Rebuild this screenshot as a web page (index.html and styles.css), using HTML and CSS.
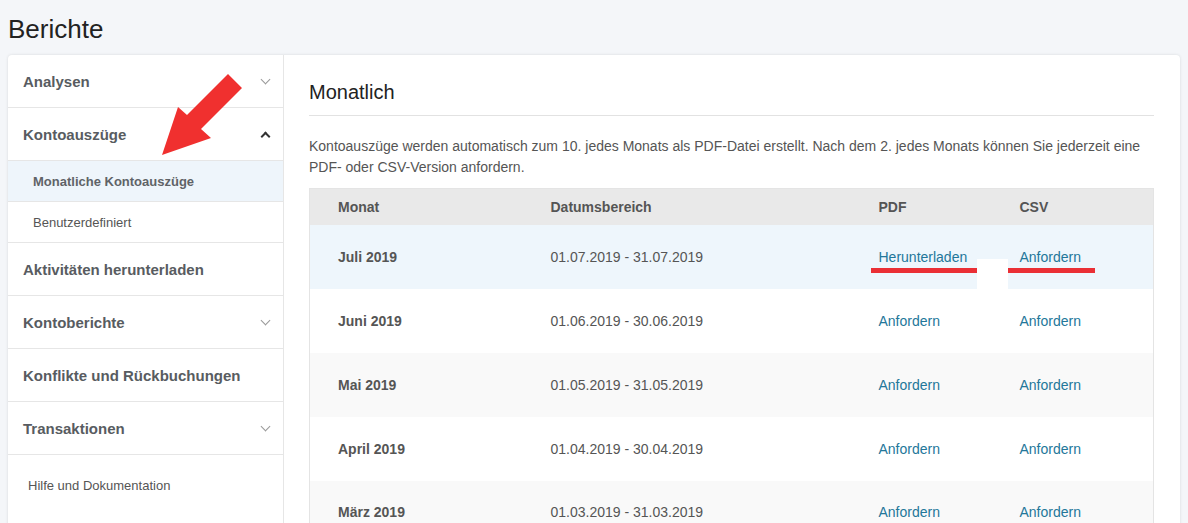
FILE: index.html
```html
<!DOCTYPE html>
<html lang="de">
<head>
    <meta charset="UTF-8">
    <title>Berichte</title>
    <link rel="stylesheet" href="styles.css">
</head>
<body>
    <h1 class="pageTitle">Berichte</h1>

    <div class="card">
        <ul class="sidebar">
            <li class="navItem">Analysen <span class="chev"></span></li>
            <li class="navItem open">Kontoauszüge <span class="chev up"></span></li>
            <li class="subItem active">Monatliche Kontoauszüge</li>
            <li class="subItem">Benutzerdefiniert</li>
            <li class="navItem">Aktivitäten herunterladen</li>
            <li class="navItem">Kontoberichte <span class="chev"></span></li>
            <li class="navItem">Konflikte und Rückbuchungen</li>
            <li class="navItem">Transaktionen <span class="chev"></span></li>
            <li class="helpItem">Hilfe und Dokumentation</li>
        </ul>

        <div class="main">
            <h2>Monatlich</h2>
            <p class="intro">Kontoauszüge werden automatisch zum 10. jedes Monats als PDF-Datei erstellt. Nach dem 2. jedes Monats können Sie jederzeit eine PDF- oder CSV-Version anfordern.</p>

            <table class="statements">
                <thead>
                    <tr>
                        <th class="c1">Monat</th>
                        <th class="c2">Datumsbereich</th>
                        <th class="c3">PDF</th>
                        <th class="c4">CSV</th>
                    </tr>
                </thead>
                <tbody>
                    <tr class="current">
                        <td class="month">Juli 2019</td>
                        <td>01.07.2019 - 31.07.2019</td>
                        <td><a href="#">Herunterladen</a></td>
                        <td><a href="#">Anfordern</a></td>
                    </tr>
                    <tr>
                        <td class="month">Juni 2019</td>
                        <td>01.06.2019 - 30.06.2019</td>
                        <td><a href="#">Anfordern</a></td>
                        <td><a href="#">Anfordern</a></td>
                    </tr>
                    <tr>
                        <td class="month">Mai 2019</td>
                        <td>01.05.2019 - 31.05.2019</td>
                        <td><a href="#">Anfordern</a></td>
                        <td><a href="#">Anfordern</a></td>
                    </tr>
                    <tr>
                        <td class="month">April 2019</td>
                        <td>01.04.2019 - 30.04.2019</td>
                        <td><a href="#">Anfordern</a></td>
                        <td><a href="#">Anfordern</a></td>
                    </tr>
                    <tr>
                        <td class="month">März 2019</td>
                        <td>01.03.2019 - 31.03.2019</td>
                        <td><a href="#">Anfordern</a></td>
                        <td><a href="#">Anfordern</a></td>
                    </tr>
                </tbody>
            </table>
        </div>
    </div>

    <!-- annotations drawn over the screenshot -->
    <svg class="arrow" width="260" height="170" viewBox="0 0 260 170">
        <polygon points="228,74 242,88 201,129 211,138 162,155 178,107 187,115" fill="#f0302f"/>
    </svg>
    <div class="mark mark1"></div>
    <div class="mark mark2"></div>
    <div class="gap"></div>
</body>
</html>
```

FILE: styles.css
```css
*{
    margin: 0;
    padding: 0;
    box-sizing: border-box;
}

body{
    background-color: #f4f6f9;
    font-family: "Liberation Sans", Arial, sans-serif;
    color: #555;
    padding: 0 8px;
    overflow: hidden;
}

.pageTitle{
    font-size: 26px;
    font-weight: normal;
    color: #222;
    line-height: 30px;
    padding-top: 14px;
    margin-bottom: 11px;
}

.card{
    display: flex;
    background: #fff;
    border-radius: 4px;
    box-shadow: 0 0 3px rgba(0, 0, 0, 0.12);
    width: 1172px;
}

.sidebar{
    list-style-type: none;
    width: 276px;
    flex-shrink: 0;
    border-right: 1px solid #e6e6e6;
}

.navItem{
    height: 53px;
    border-bottom: 1px solid #e6e6e6;
    display: flex;
    align-items: center;
    justify-content: space-between;
    padding: 0 11px 0 15px;
    font-size: 15px;
    font-weight: bold;
    color: #585c61;
}

.chev{
    width: 7px;
    height: 7px;
    border-right: 1px solid #999;
    border-bottom: 1px solid #999;
    transform: rotate(45deg);
    margin-right: 3px;
    margin-top: -4px;
}

.chev.up{
    border-color: #333;
    border-width: 2px;
    transform: rotate(-135deg);
    margin-top: 4px;
}

.subItem{
    height: 41px;
    border-bottom: 1px solid #e6e6e6;
    display: flex;
    align-items: center;
    padding-left: 25px;
    font-size: 13px;
    color: #555;
}

.subItem.active{
    background: #eef5fb;
    font-weight: bold;
    color: #5f6367;
}

.helpItem{
    height: 60px;
    display: flex;
    align-items: center;
    padding-left: 20px;
    font-size: 13px;
    color: #555;
}

.main{
    flex: 1;
    padding: 25px 26px 0 25px;
}

.main h2{
    font-size: 20px;
    font-weight: normal;
    color: #222;
    line-height: 24px;
    padding-bottom: 11px;
    border-bottom: 1px solid #e2e2e2;
}

.intro{
    font-size: 14px;
    line-height: 21px;
    margin-top: 20px;
    margin-bottom: 10px;
    color: #555;
}

.statements{
    width: 100%;
    border-collapse: collapse;
    border: 1px solid #e4e4e4;
    font-size: 14px;
}

.statements th{
    background: #e9e9e9;
    height: 36px;
    text-align: left;
    font-weight: bold;
    color: #555;
}

.statements td{
    height: 64px;
}

.c1{ width: 241px; padding-left: 28px; }
.c2{ width: 328px; }
.c3{ width: 141px; }

.statements td:first-child{
    padding-left: 28px;
}

.month{
    font-weight: bold;
    color: #555;
}

.statements tbody tr:nth-child(odd){
    background: #f9f9f9;
}

.statements tbody tr.current{
    background: #eef6fc;
}

.statements a{
    color: #23779a;
    text-decoration: none;
}

.arrow{
    position: absolute;
    left: 0;
    top: 0;
}

.mark{
    position: absolute;
    height: 5px;
    background: #ea2f35;
    top: 268px;
}

.mark1{
    left: 871px;
    width: 106px;
}

.mark2{
    left: 1008px;
    width: 87px;
}

.gap{
    position: absolute;
    left: 977px;
    top: 259px;
    width: 31px;
    height: 31px;
    background: #fff;
}
```
